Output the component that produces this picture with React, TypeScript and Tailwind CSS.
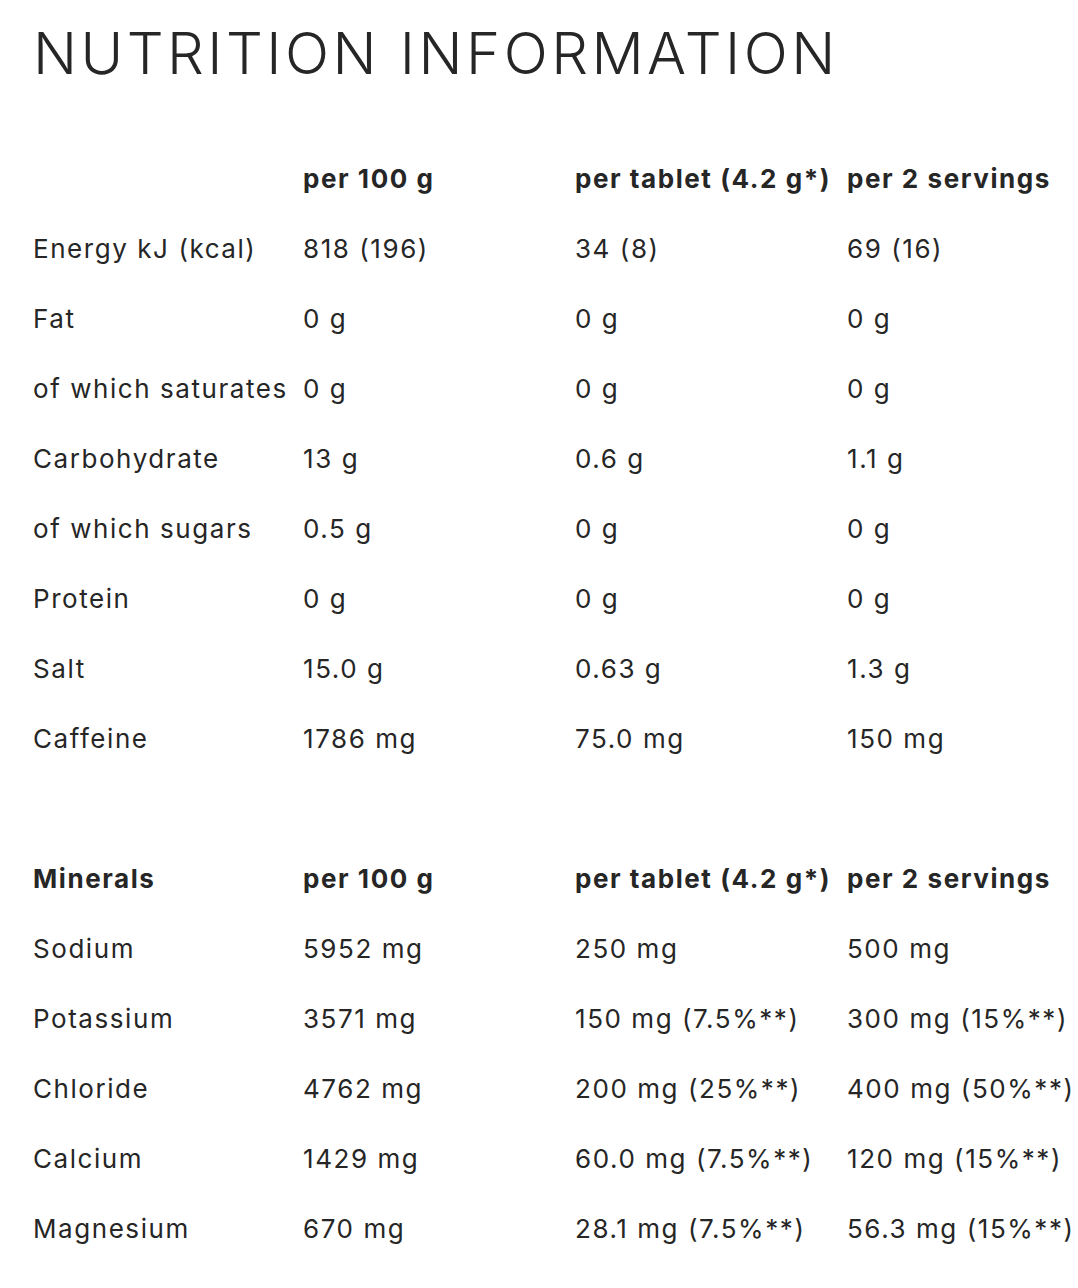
import React from "react";

const nutrition: [string, string, string, string][] = [
  ["Energy kJ (kcal)", "818 (196)", "34 (8)", "69 (16)"],
  ["Fat", "0 g", "0 g", "0 g"],
  ["of which saturates", "0 g", "0 g", "0 g"],
  ["Carbohydrate", "13 g", "0.6 g", "1.1 g"],
  ["of which sugars", "0.5 g", "0 g", "0 g"],
  ["Protein", "0 g", "0 g", "0 g"],
  ["Salt", "15.0 g", "0.63 g", "1.3 g"],
  ["Caffeine", "1786 mg", "75.0 mg", "150 mg"],
];

const minerals: [string, string, string, string][] = [
  ["Sodium", "5952 mg", "250 mg", "500 mg"],
  ["Potassium", "3571 mg", "150 mg (7.5%**)", "300 mg (15%**)"],
  ["Chloride", "4762 mg", "200 mg (25%**)", "400 mg (50%**)"],
  ["Calcium", "1429 mg", "60.0 mg (7.5%**)", "120 mg (15%**)"],
  ["Magnesium", "670 mg", "28.1 mg (7.5%**)", "56.3 mg (15%**)"],
];

function Row({ cells, bold }: { cells: string[]; bold?: boolean }) {
  return (
    <div className="grid grid-cols-[270px_272px_272px_260px] h-[70px] items-center">
      {cells.map((c, i) => (
        <div
          key={i}
          className={`whitespace-nowrap text-[26px] leading-[30px] tracking-[0.06em] ${bold ? "font-bold" : "font-normal"}`}
        >
          {c}
        </div>
      ))}
    </div>
  );
}

export default function App() {
  return (
    <div
      className="bg-white text-[#262626] pl-[33px] h-[1288px] overflow-hidden"
      style={{ fontFamily: "Inter, 'Noto Sans', sans-serif" }}
    >
      <div className="h-[106px] flex items-center text-[58px] font-light leading-none tracking-[0.06em]">
        NUTRITION INFORMATION
      </div>
      <div className="mt-[38px]">
        <Row cells={["", "per 100 g", "per tablet (4.2 g*)", "per 2 servings"]} bold />
        {nutrition.map((r, i) => (
          <Row key={i} cells={r} />
        ))}
        <div className="h-[70px]" />
        <Row cells={["Minerals", "per 100 g", "per tablet (4.2 g*)", "per 2 servings"]} bold />
        {minerals.map((r, i) => (
          <Row key={i} cells={r} />
        ))}
      </div>
    </div>
  );
}
